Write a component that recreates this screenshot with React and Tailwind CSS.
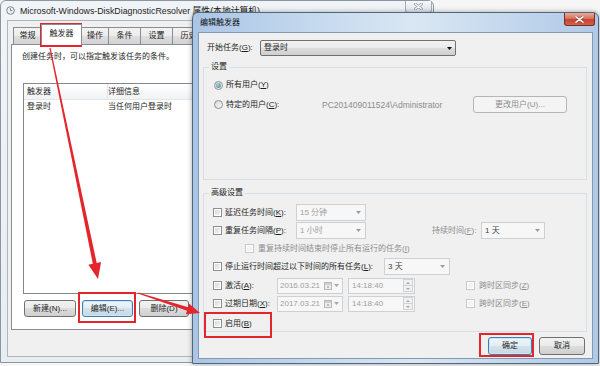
import React from "react";

const FONT = "font-['Liberation_Sans','Noto_Sans_CJK_SC',sans-serif]";

const U = ({ children }) => <span className="underline underline-offset-1">{children}</span>;

function Tri({ color = "#000" }) {
  return (
    <svg width="5" height="3" viewBox="0 0 5 3" className="block shrink-0">
      <polygon points="0,0 5,0 2.5,3" fill={color} />
    </svg>
  );
}

function Check({ disabled, className = "" }) {
  return (
    <span
      className={`block h-[9px] w-[9px] shrink-0 border shadow-[inset_0_0_0_1px_#ffffff] ${
        disabled
          ? "border-[#c9c9c9] bg-[#f3f3f3]"
          : "border-[#8e8f8f] bg-[linear-gradient(135deg,#d3d5d8,#f8f8f8)]"
      } ${className}`}
    />
  );
}

function Radio({ checked, disabled }) {
  return (
    <span
      className={`flex h-[9px] w-[9px] shrink-0 items-center justify-center rounded-full border ${
        disabled ? "border-[#c4c4c4] bg-[#f3f3f3]" : "border-[#8e8f8f] bg-[linear-gradient(135deg,#d5d7da,#fafafa)]"
      }`}
    >
      {checked && (
        <span className="block h-[5px] w-[5px] rounded-full bg-[radial-gradient(circle_at_40%_35%,#a6d3d8,#3f7f8f)]" />
      )}
    </span>
  );
}

function Btn({ children, className = "", variant = "normal" }) {
  const v = {
    normal:
      "border-[#707070] bg-[linear-gradient(#f2f2f2_0%,#ebebeb_50%,#dddddd_50%,#cfcfcf_100%)] text-[#1e1e1e]",
    def: "border-[#3c7fb1] bg-[linear-gradient(#eef5fa_0%,#e3edf4_50%,#d4e2ec_50%,#c7d8e4_100%)] text-[#1e1e1e] shadow-[inset_0_0_0_1px_#c8e6f6]",
    disabled: "border-[#b3b7ba] bg-[#f4f4f4] text-[#8d8d8d]",
  }[variant];
  return (
    <button
      type="button"
      className={`flex shrink-0 items-center justify-center rounded-[3px] border leading-[10px] ${v} ${className}`}
    >
      {children}
    </button>
  );
}

function Sel({ text, className = "", dim }) {
  return (
    <div className={`flex h-[17px] shrink-0 items-center border border-[#cdd1d4] bg-[#f7f7f7] ${className}`}>
      <span className={`flex-1 whitespace-nowrap pl-[3px] ${dim ? "text-[#a0a0a0]" : "text-[#444444]"}`}>{text}</span>
      <span className="mr-[4px]">
        <Tri color="#9c9c9c" />
      </span>
    </div>
  );
}

function DateBox({ text }) {
  return (
    <div className="flex h-[16px] w-[66px] shrink-0 items-center border border-[#cdd1d4] bg-[#f7f7f7]">
      <span className="flex-1 pl-[2px] text-[#a0a0a0]">{text}</span>
      <svg width="8" height="8" viewBox="0 0 8 8" className="mr-[2px] block shrink-0">
        <rect x="0.5" y="0.5" width="7" height="7" fill="#ececec" stroke="#b9b9b9" />
        <rect x="1" y="1" width="6" height="2" fill="#cfcfcf" />
        <rect x="3" y="4" width="2" height="2" fill="#bdbdbd" />
      </svg>
      <span className="mr-[3px]">
        <Tri color="#a8a8a8" />
      </span>
    </div>
  );
}

function TimeBox({ text }) {
  return (
    <div className="ml-[5px] flex h-[16px] w-[67px] shrink-0 items-center border border-[#cdd1d4] bg-[#f7f7f7]">
      <span className="flex-1 pl-[3px] text-[#a0a0a0]">{text}</span>
      <div className="mr-[1px] flex h-[13px] w-[10px] flex-col border border-[#d2d2d2] bg-[#f1f1f1]">
        <div className="flex flex-1 items-center justify-center border-b border-[#d2d2d2]">
          <svg width="4" height="2" viewBox="0 0 4 2" className="block">
            <polygon points="0,2 4,2 2,0" fill="#a8a8a8" />
          </svg>
        </div>
        <div className="flex flex-1 items-center justify-center">
          <svg width="4" height="2" viewBox="0 0 4 2" className="block">
            <polygon points="0,0 4,0 2,2" fill="#a8a8a8" />
          </svg>
        </div>
      </div>
    </div>
  );
}

function Tab({ children, sel, className = "" }) {
  if (sel) {
    return (
      <div
        className={`relative z-10 -mb-px -ml-px flex h-[21px] shrink-0 items-center justify-center border border-b-0 border-[#898c95] bg-white pb-[3px] ${className}`}
      >
        {children}
      </div>
    );
  }
  return (
    <div
      className={`-ml-px flex h-[17px] shrink-0 items-center justify-center border border-b-0 border-[#898c95] bg-[linear-gradient(#f3f3f3_0%,#ebebeb_50%,#dedede_50%,#d3d3d3_100%)] first:ml-0 ${className}`}
    >
      {children}
    </div>
  );
}

function ClockIcon() {
  return (
    <svg width="9" height="9" viewBox="0 0 9 9" className="block shrink-0">
      <circle cx="4.5" cy="4.5" r="3.8" fill="#eef1f4" stroke="#7c8793" strokeWidth="1" />
      <path d="M4.5 2.2 V4.6 H6.3" fill="none" stroke="#6a7480" strokeWidth="0.9" />
    </svg>
  );
}

function BackWindow() {
  return (
    <div className="absolute left-0 top-0 flex h-[363px] w-[434px] flex-col rounded-t-[6px] border border-[#8a96a2] bg-[linear-gradient(#f1f4f7,#e8edf2)]">
      <div className="flex h-[19px] shrink-0 items-start">
        <div className="flex h-[19px] items-center pl-[5px]">
          <ClockIcon />
          <span className="ml-[5px] whitespace-nowrap text-[8.8px] text-[#222222]">
            Microsoft-Windows-DiskDiagnosticResolver 属性(本地计算机)
          </span>
        </div>
        <div className="ml-auto mr-[1px] flex h-[12px] w-[27px] items-center justify-center rounded-b-[3px] border border-t-0 border-[#a3abb4] bg-[linear-gradient(#f6f8fa,#dfe5eb)]">
          <svg width="9" height="7" viewBox="0 0 9 7" className="block">
            <path d="M1 0.8 L8 6.2 M8 0.8 L1 6.2" stroke="#8a929b" strokeWidth="2.6" strokeLinecap="round" />
            <path d="M1 0.8 L8 6.2 M8 0.8 L1 6.2" stroke="#ffffff" strokeWidth="1.1" strokeLinecap="round" />
          </svg>
        </div>
      </div>
      <div className="mx-[6px] mb-[5px] flex flex-1 flex-col border border-[#aeb6be] bg-[#f0f0f0] pl-[3px] pt-[3px]">
        <div className="flex h-[20px] shrink-0 items-end pl-[2px]">
          <Tab className="w-[29px] !ml-0">常规</Tab>
          <Tab sel className="w-[41px]">触发器</Tab>
          <Tab className="w-[28px]">操作</Tab>
          <Tab className="w-[33px]">条件</Tab>
          <Tab className="w-[33px]">设置</Tab>
          <Tab className="w-[33px]">历史</Tab>
        </div>
        <div className="h-[286px] w-[413px] shrink-0 border border-[#898c95] bg-white px-[10px] pt-[7px]">
          <div className="whitespace-nowrap">创建任务时，可以指定触发该任务的条件。</div>
          <div className="ml-[1px] mt-[21px] h-[211px] w-[390px] border border-[#828790] bg-white">
            <div className="flex h-[16px] items-center border-b border-[#e3e5e8] bg-[linear-gradient(#ffffff,#f2f3f5)]">
              <div className="flex h-full w-[84px] items-center border-r border-[#e3e5e8] pl-[3px]">触发器</div>
              <div>详细信息</div>
            </div>
            <div className="flex h-[14px] items-center">
              <div className="w-[84px] pl-[3px]">登录时</div>
              <div>当任何用户登录时</div>
            </div>
          </div>
          <div className="ml-[2px] mt-[6px] flex gap-[6px]">
            <Btn className="h-[17px] w-[52px]">新建(N)...</Btn>
            <Btn variant="def" className="h-[17px] w-[51px]">编辑(E)...</Btn>
            <Btn className="h-[17px] w-[50px]">删除(D)</Btn>
          </div>
        </div>
      </div>
    </div>
  );
}

function Dialog() {
  return (
    <div className="absolute left-[192px] top-[12px] flex h-[352px] w-[407px] flex-col rounded-t-[6px] border border-[#52667c] bg-[linear-gradient(to_right,#aac5e5_0%,#c5d9ee_30%,#dae7f3_55%,#c2d6ec_80%,#b0c9e7_100%)] shadow-[0_0_5px_rgba(0,0,0,0.35)]">
      <div className="flex h-[19px] shrink-0 items-start">
        <span className="ml-[7px] self-center text-[#111111]">编辑触发器</span>
        <div className="ml-auto mr-[3px] flex h-[13px] w-[31px] items-center justify-center rounded-b-[3px] border border-t-0 border-[#7b2e25] bg-[linear-gradient(#e9a999_0%,#d9745f_45%,#c64331_55%,#d0614b_100%)]">
          <svg width="9" height="7" viewBox="0 0 9 7" className="block">
            <path d="M1 0.8 L8 6.2 M8 0.8 L1 6.2" stroke="#5a1d16" strokeWidth="2.8" strokeLinecap="round" opacity="0.5" />
            <path d="M1 0.8 L8 6.2 M8 0.8 L1 6.2" stroke="#ffffff" strokeWidth="1.5" strokeLinecap="round" />
          </svg>
        </div>
      </div>
      <div className="mx-[5px] mb-[4px] flex flex-1 flex-col border border-[#8399b0] bg-[#f0f0f0] px-[4px] pt-[7px]">
        <div className="flex h-[16px] shrink-0 items-center">
          <div className="w-[57px] whitespace-nowrap pl-[4px]">
            开始任务(<U>G</U>):
          </div>
          <div className="flex h-[16px] w-[196px] items-center rounded-[2px] border border-[#707070] bg-[linear-gradient(#f2f2f2_0%,#ebebeb_50%,#dddddd_50%,#cfcfcf_100%)]">
            <span className="flex-1 pl-[3px]">登录时</span>
            <span className="mr-[3px]">
              <Tri color="#111111" />
            </span>
          </div>
        </div>

        <fieldset className="mt-[6px] h-[118px] w-[384px] shrink-0 border border-[#d5dfe5]">
          <legend className="ml-[5px] px-[2px] leading-[10px]">设置</legend>
          <div className="mt-[7px] flex h-[12px] items-center pl-[10px]">
            <Radio checked />
            <span className="ml-[3px]">
              所有用户(<U>Y</U>)
            </span>
          </div>
          <div className="mt-[5px] flex h-[17px] items-center pl-[10px]">
            <div className="flex w-[108px] items-center">
              <Radio />
              <span className="ml-[3px] whitespace-nowrap">
                特定的用户(<U>C</U>):
              </span>
            </div>
            <div className="w-[151px] whitespace-nowrap text-[8.5px] text-[#8d8d8d]">PC201409011524\Administrator</div>
            <Btn variant="disabled" className="h-[17px] w-[94px]">
              更改用户(U)...
            </Btn>
          </div>
        </fieldset>

        <fieldset className="mt-[8px] h-[144px] w-[384px] shrink-0 border border-[#d5dfe5]">
          <legend className="ml-[5px] px-[2px] leading-[10px]">高级设置</legend>
          <div className="mt-[6px] flex h-[17px] items-center pl-[9px]">
            <Check />
            <span className="ml-[3px] w-[71px] whitespace-nowrap">
              延迟任务时间(<U>K</U>):
            </span>
            <Sel dim text="15 分钟" className="w-[70px]" />
          </div>
          <div className="mt-[1px] flex h-[17px] items-center pl-[9px]">
            <Check />
            <span className="ml-[3px] w-[71px] whitespace-nowrap">
              重复任务间隔(<U>P</U>):
            </span>
            <Sel dim text="1 小时" className="w-[70px]" />
            <span className="ml-[66px] w-[49px] whitespace-nowrap text-[#8d8d8d]">
              持续时间(<U>F</U>):
            </span>
            <Sel text="1 天" className="w-[64px]" />
          </div>
          <div className="mt-[1px] flex h-[17px] items-center pl-[41px]">
            <Check disabled />
            <span className="ml-[4px] whitespace-nowrap text-[#8d8d8d]">
              重复持续时间结束时停止所有运行的任务(<U>I</U>)
            </span>
          </div>
          <div className="mt-[1px] flex h-[17px] items-center pl-[9px]">
            <Check />
            <span className="ml-[3px] w-[159px] whitespace-nowrap">
              停止运行时间超过以下时间的所有任务(<U>L</U>):
            </span>
            <Sel text="3 天" className="w-[66px]" />
          </div>
          <div className="mt-[2px] flex h-[17px] items-center pl-[9px]">
            <Check />
            <span className="ml-[3px] w-[52px] whitespace-nowrap">
              激活(<U>A</U>):
            </span>
            <DateBox text="2016.03.21" />
            <TimeBox text="14:18:40" />
            <Check disabled className="ml-[51px]" />
            <span className="ml-[4px] whitespace-nowrap text-[#8d8d8d]">
              跨时区同步(<U>Z</U>)
            </span>
          </div>
          <div className="mt-[1px] flex h-[17px] items-center pl-[9px]">
            <Check />
            <span className="ml-[3px] w-[52px] whitespace-nowrap">
              过期日期(<U>X</U>):
            </span>
            <DateBox text="2017.03.21" />
            <TimeBox text="14:18:40" />
            <Check disabled className="ml-[51px]" />
            <span className="ml-[4px] whitespace-nowrap text-[#8d8d8d]">
              跨时区同步(<U>E</U>)
            </span>
          </div>
          <div className="mt-[4px] flex h-[15px] items-center pl-[9px]">
            <Check />
            <span className="ml-[3px] whitespace-nowrap">
              启用(<U>B</U>)
            </span>
          </div>
        </fieldset>

        <div className="mt-[5px] flex shrink-0 justify-end gap-[7px] pr-[3px]">
          <Btn variant="def" className="h-[18px] w-[44px]">
            确定
          </Btn>
          <Btn className="h-[18px] w-[46px]">取消</Btn>
        </div>
      </div>
    </div>
  );
}

function Annotations() {
  const red = "#e3262b";
  return (
    <svg className="pointer-events-none absolute left-0 top-0" width="600" height="366" viewBox="0 0 600 366">
      <g fill="none" stroke={red} strokeWidth="2">
        <rect x="41" y="24" width="40" height="22" />
        <rect x="79" y="293" width="56" height="29" />
        <rect x="205" y="313" width="66" height="24" />
        <rect x="480" y="334" width="53" height="22" />
      </g>
      <polygon
        fill={red}
        points="49.4,48.1 92.8,263.7 88.4,264.7 98,279 101.1,262.0 96.7,262.9 50.6,47.9"
      />
      <polygon
        fill={red}
        points="137.85,293.48 187.05,310.7 185.9,314.2 200,313 189.3,303.8 188.15,307.3 138.15,292.52"
      />
    </svg>
  );
}

export default function App() {
  return (
    <div className={`relative h-[366px] w-[600px] overflow-hidden bg-[#f6f6f6] text-[8px] leading-[10px] text-[#1e1e1e] ${FONT}`}>
      <BackWindow />
      <Dialog />
      <Annotations />
    </div>
  );
}
